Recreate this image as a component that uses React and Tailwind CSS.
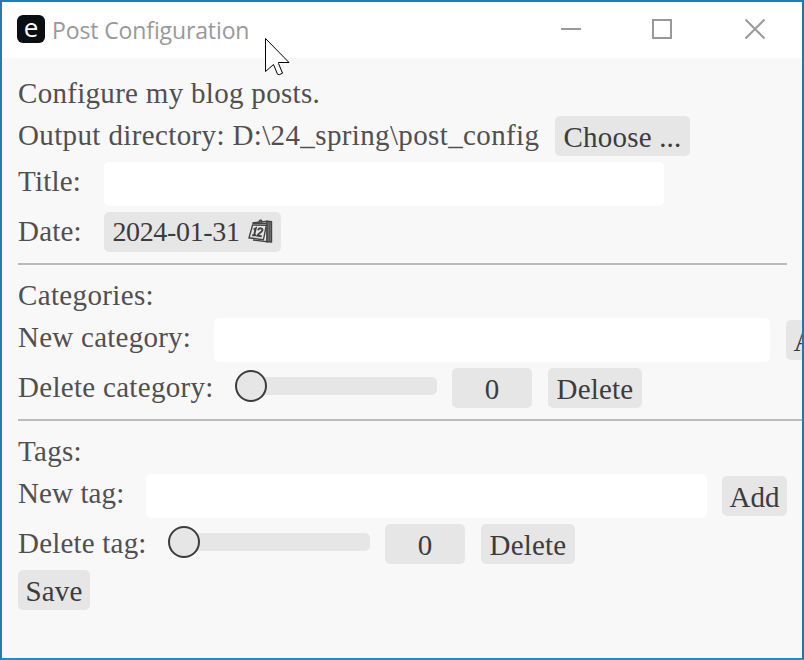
import React from "react";

function Label({ className = "", children }) {
  return (
    <span className={`shrink-0 whitespace-pre text-[29px] leading-[34px] text-[#505050] ${className}`}>
      {children}
    </span>
  );
}

function Button({ className = "", children }) {
  return (
    <button
      type="button"
      className={`flex h-10 shrink-0 items-center justify-center rounded-[5px] bg-[#e6e6e6] pt-0.5 text-[29px] leading-[38px] whitespace-pre text-[#3c3c3c] ${className}`}
    >
      {children}
    </button>
  );
}

function TextField({ className = "", label }) {
  return <input aria-label={label} className={`h-11 shrink-0 rounded-[5px] bg-white outline-none ${className}`} />;
}

function Slider() {
  return (
    <div className="flex h-9 w-[202px] shrink-0 items-center">
      <div className="z-10 -mr-[30px] size-8 shrink-0 rounded-full border-2 border-[#3c3c3c] bg-[#e6e6e6]" />
      <div className="ml-[15px] h-[18px] flex-1 rounded-r-[5px] bg-[#e6e6e6]" />
    </div>
  );
}

function Calendar() {
  return (
    <svg width="25" height="25" viewBox="0 0 25 25" fill="none" stroke="#444" strokeWidth="1.4" className="-mt-1 ml-2 shrink-0">
      <path d="M4.5 4 19 2.2V22.8L5 21" />
      <path d="M19 2.3 23.5 2.6V23L19 22.8Z" fill="#777" />
      <path d="M21.3 3V22.5" strokeWidth=".8" />
      <path d="M4.6 6 18.4 6.2 15.4 20.8 1 18.8Z" fill="#e6e6e6" />
      <path d="M4.5 4.4H18.5M13.5 3.5V1M11 3.5C11 1.8 12 1 13.5 1" strokeWidth="1.4" />
      <path d="M5.6 10.6 7.8 9.2 6.1 16.3M4.2 16.3H8M10 11.2C11 8.6 15 8.8 14.4 11.2 13.8 13.4 10.2 14.4 9.3 16.7L13.7 17.2" strokeWidth="1.9" />
    </svg>
  );
}

function Cursor() {
  return (
    <svg width="26" height="40" viewBox="0 0 26 40" className="absolute top-[35px] left-[262px]">
      <path
        d="M1.5 1.5V34.5L9.5 27.5L13.5 37.2Q15 38.5 18.5 36.2L14.5 26.5V25.5H25Z"
        fill="#fff"
        stroke="#000"
        strokeWidth="1"
      />
    </svg>
  );
}

export default function App() {
  return (
    <div className="relative flex h-[660px] w-[804px] flex-col overflow-hidden border-2 border-t-[#1b7fc0] border-r-[#2874a8] border-b-[#0c94e0] border-l-[#287aaa] bg-[#f8f8f8] font-['Liberation_Serif',serif]">
      <header className="flex h-14 shrink-0 items-center bg-white pl-[15px] text-[#999]">
        <div className="-mt-0.5 flex size-7 items-center justify-center rounded-[6px] bg-[#0a0f14] font-['Open_Sans',sans-serif] text-[26px] leading-none text-white">
          <span className="-mt-[5px]">e</span>
        </div>
        <h1 className="ml-[7px] w-[200px] whitespace-pre font-['Open_Sans',sans-serif] text-[23px] tracking-[-0.12px]">
          Post Configuration
        </h1>
        <svg width="206" height="22" viewBox="0 0 206 22" fill="none" stroke="#999" strokeWidth="2" className="-mt-0.5 ml-[309px]">
          <path d="M0 11H20M92 2H110V20H92ZM184.5 1.5 203.5 20.5M203.5 1.5 184.5 20.5" />
        </svg>
      </header>

      <main className="flex flex-col gap-1.5 pt-[18px] pl-4">
        <div className="flex h-[34px]">
          <Label className="tracking-[0.3px]">Configure my blog posts.</Label>
        </div>
        <div className="flex h-10">
          <Label className="mt-0.5 w-[537px] tracking-[0.37px]">{"Output directory: D:\\24_spring\\post_config"}</Label>
          <Button className="w-[135px] tracking-[0.2px]">Choose ...</Button>
        </div>
        <div className="flex h-11">
          <Label className="mt-0.5 w-[86px] tracking-[0.2px]">Title:</Label>
          <TextField label="Title" className="w-[560px]" />
        </div>
        <div className="flex h-10">
          <Label className="mt-0.5 w-[86px] tracking-[0.2px]">Date:</Label>
          <Button className="w-[177px]">
            <span className="-mt-[3px] text-[28px] tracking-[-0.35px]">2024-01-31</span>
            <Calendar />
          </Button>
        </div>
        <div className="mt-[5px] mb-[7px] h-0.5 w-[769px] bg-[#bbb]" />

        <div className="flex h-[34px]">
          <Label className="tracking-[0.35px]">Categories:</Label>
        </div>
        <div className="flex h-11">
          <Label className="mt-0.5 w-[196px] tracking-[0.25px]">New category:</Label>
          <TextField label="New category" className="w-[556px]" />
          <Button className="mt-0.5 ml-4 w-[65px] tracking-[0.1px]">Add</Button>
        </div>
        <div className="flex h-10">
          <Label className="mt-0.5 w-[217px] tracking-[0.3px]">Delete category:</Label>
          <Slider />
          <Button className="ml-[15px] w-20">0</Button>
          <Button className="ml-4 w-[94px] tracking-[0.2px]">Delete</Button>
        </div>
        <div className="mt-[5px] mb-[7px] h-0.5 bg-[#bbb]" />

        <div className="flex h-[34px]">
          <Label className="tracking-[0.3px]">Tags:</Label>
        </div>
        <div className="flex h-11">
          <Label className="mt-0.5 w-[128px] tracking-[0.1px]">New tag:</Label>
          <TextField label="New tag" className="w-[561px]" />
          <Button className="mt-0.5 ml-[15px] w-[65px] tracking-[0.1px]">Add</Button>
        </div>
        <div className="flex h-10">
          <Label className="mt-0.5 w-[150px] tracking-[0.2px]">Delete tag:</Label>
          <Slider />
          <Button className="ml-[15px] w-20">0</Button>
          <Button className="ml-4 w-[94px] tracking-[0.2px]">Delete</Button>
        </div>
        <Button className="w-[72px] tracking-[0.2px]">Save</Button>
      </main>
      <Cursor />
    </div>
  );
}
